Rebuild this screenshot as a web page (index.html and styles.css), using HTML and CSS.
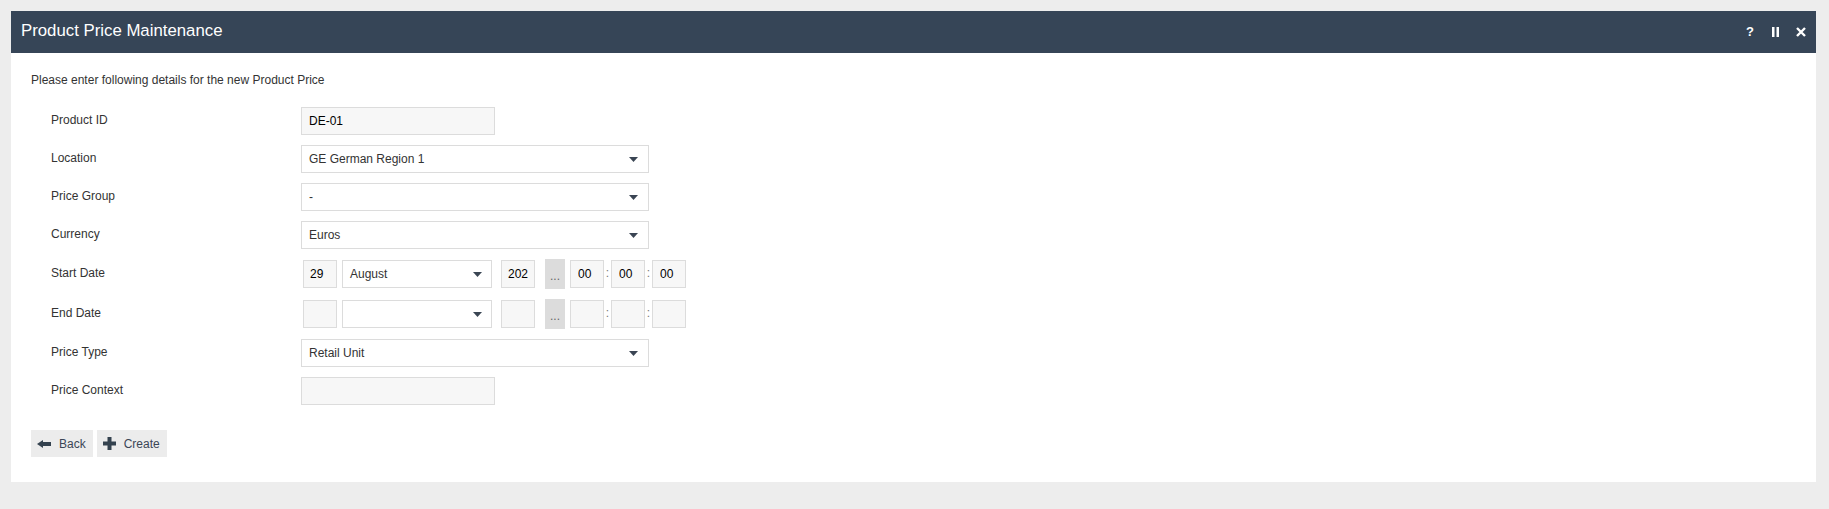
FILE: index.html
```html
<!DOCTYPE html>
<html lang="en">
<head>
    <meta charset="UTF-8">
    <title>Product Price Maintenance</title>
    <link rel="stylesheet" href="styles.css">
</head>
<body>

    <div class="panel">
        <div class="panel-header">
            <h1>Product Price Maintenance</h1>
            <div class="header-tools">
                <span class="tool tool-help">?</span>
                <svg class="tool" width="7" height="10" viewBox="0 0 7 10">
                    <rect x="0" y="0" width="2.5" height="10" fill="#fff"/>
                    <rect x="4.5" y="0" width="2.5" height="10" fill="#fff"/>
                </svg>
                <svg class="tool" width="10" height="10" viewBox="0 0 10 10">
                    <path d="M1 1 L9 9 M9 1 L1 9" stroke="#fff" stroke-width="2.4"/>
                </svg>
            </div>
        </div>

        <div class="panel-body">
            <p class="intro">Please enter following details for the new Product Price</p>

            <div class="form">
                <div class="row">
                    <label>Product ID</label>
                    <input class="input" type="text" value="DE-01" readonly>
                </div>
                <div class="row">
                    <label>Location</label>
                    <div class="select">
                        <span>GE German Region 1</span>
                        <svg class="caret" width="9" height="5" viewBox="0 0 9 5"><path d="M0 0 H9 L4.5 5 Z"/></svg>
                    </div>
                </div>
                <div class="row">
                    <label>Price Group</label>
                    <div class="select">
                        <span>-</span>
                        <svg class="caret" width="9" height="5" viewBox="0 0 9 5"><path d="M0 0 H9 L4.5 5 Z"/></svg>
                    </div>
                </div>
                <div class="row">
                    <label>Currency</label>
                    <div class="select">
                        <span>Euros</span>
                        <svg class="caret" width="9" height="5" viewBox="0 0 9 5"><path d="M0 0 H9 L4.5 5 Z"/></svg>
                    </div>
                </div>
                <div class="row date-row">
                    <label>Start Date</label>
                    <input class="input day" type="text" value="29">
                    <div class="select month">
                        <span>August</span>
                        <svg class="caret" width="9" height="5" viewBox="0 0 9 5"><path d="M0 0 H9 L4.5 5 Z"/></svg>
                    </div>
                    <input class="input year" type="text" value="202">
                    <span class="picker">...</span>
                    <input class="input time hour" type="text" value="00">
                    <span class="colon">:</span>
                    <input class="input time" type="text" value="00">
                    <span class="colon">:</span>
                    <input class="input time" type="text" value="00">
                </div>
                <div class="row date-row">
                    <label>End Date</label>
                    <input class="input day" type="text" value="">
                    <div class="select month">
                        <span></span>
                        <svg class="caret" width="9" height="5" viewBox="0 0 9 5"><path d="M0 0 H9 L4.5 5 Z"/></svg>
                    </div>
                    <input class="input year" type="text" value="">
                    <span class="picker">...</span>
                    <input class="input time hour" type="text" value="">
                    <span class="colon">:</span>
                    <input class="input time" type="text" value="">
                    <span class="colon">:</span>
                    <input class="input time" type="text" value="">
                </div>
                <div class="row">
                    <label>Price Type</label>
                    <div class="select">
                        <span>Retail Unit</span>
                        <svg class="caret" width="9" height="5" viewBox="0 0 9 5"><path d="M0 0 H9 L4.5 5 Z"/></svg>
                    </div>
                </div>
                <div class="row">
                    <label>Price Context</label>
                    <input class="input" type="text" value="">
                </div>
            </div>

            <div class="actions">
                <button class="btn">
                    <svg width="14" height="8" viewBox="0 0 14 8"><path d="M0 4 L6 0 V2 H14 V6 H6 V8 Z"/></svg>
                    Back
                </button>
                <button class="btn">
                    <svg width="13" height="13" viewBox="0 0 13 13"><path d="M4.5 0 H8.5 V4.5 H13 V8.5 H8.5 V13 H4.5 V8.5 H0 V4.5 H4.5 Z"/></svg>
                    Create
                </button>
            </div>
        </div>
    </div>

</body>
</html>
```

FILE: styles.css
```css
html {
    background-color: #ededed;
}

body {
    font-family: 'Liberation Sans', Arial, sans-serif;
    font-size: 12px;
    color: #333;
    margin: 0;
    padding: 11px 13px 27px 11px;
}

.panel {
    background-color: #fff;
}

.panel-header {
    display: flex;
    align-items: center;
    justify-content: space-between;
    height: 42px;
    padding: 0 10px;
    background-color: #364557;
    color: #fff;
}

.panel-header h1 {
    margin: 0 0 2px 0;
    font-size: 16.8px;
    font-weight: normal;
}

.header-tools {
    display: flex;
    align-items: center;
}

.tool-help {
    font-size: 13px;
    font-weight: bold;
    line-height: 10px;
    margin-right: 18px;
}

.header-tools svg + svg {
    margin-left: 17px;
}

.panel-body {
    padding: 20px 20px 25px 20px;
}

.intro {
    margin: 0 0 20px 0;
    line-height: 14px;
}

.form {
    display: flex;
    flex-direction: column;
    gap: 10px;
    padding-left: 20px;
}

.row {
    display: flex;
    align-items: center;
    min-height: 28px;
}

.row label {
    width: 250px;
    flex-shrink: 0;
    line-height: 14px;
    padding-bottom: 2px;
}

.input {
    box-sizing: border-box;
    width: 194px;
    height: 28px;
    margin: 0;
    padding: 0 7px;
    border: 1px solid #dcdcdc;
    border-radius: 0;
    background-color: #f7f7f7;
    font-family: inherit;
    font-size: 12px;
    color: #000;
    outline: none;
}

.select {
    box-sizing: border-box;
    display: flex;
    align-items: center;
    justify-content: space-between;
    width: 348px;
    height: 28px;
    padding: 0 10px 0 7px;
    border: 1px solid #dcdcdc;
    background-color: #fff;
    color: #333;
}

.caret {
    fill: #3a4553;
    flex-shrink: 0;
}

.date-row {
    height: 30px;
}

.input.day {
    width: 34px;
    margin-left: 2px;
    padding: 0 6px;
}

.select.month {
    width: 150px;
    margin-left: 5px;
    padding-right: 9px;
}

.input.year {
    width: 34px;
    margin-left: 9px;
    padding: 0 6px;
}

.picker {
    box-sizing: border-box;
    display: flex;
    align-items: flex-end;
    justify-content: center;
    width: 20px;
    height: 30px;
    margin-left: 10px;
    padding-bottom: 6px;
    background-color: #dcdcdc;
    color: #666;
    line-height: 14px;
}

.input.time {
    width: 34px;
    padding: 0 7px;
}

.input.hour {
    margin-left: 5px;
}

.colon {
    width: 7px;
    text-align: center;
    color: #777;
    padding-bottom: 2px;
}

.actions {
    display: flex;
    gap: 4px;
    margin-top: 25px;
}

.btn {
    display: flex;
    align-items: center;
    gap: 8px;
    height: 27px;
    padding: 0 7px 0 6px;
    border: none;
    background-color: #ececec;
    font-family: inherit;
    font-size: 12px;
    color: #3b4656;
    cursor: pointer;
}

.btn svg {
    fill: #34424f;
}
```
